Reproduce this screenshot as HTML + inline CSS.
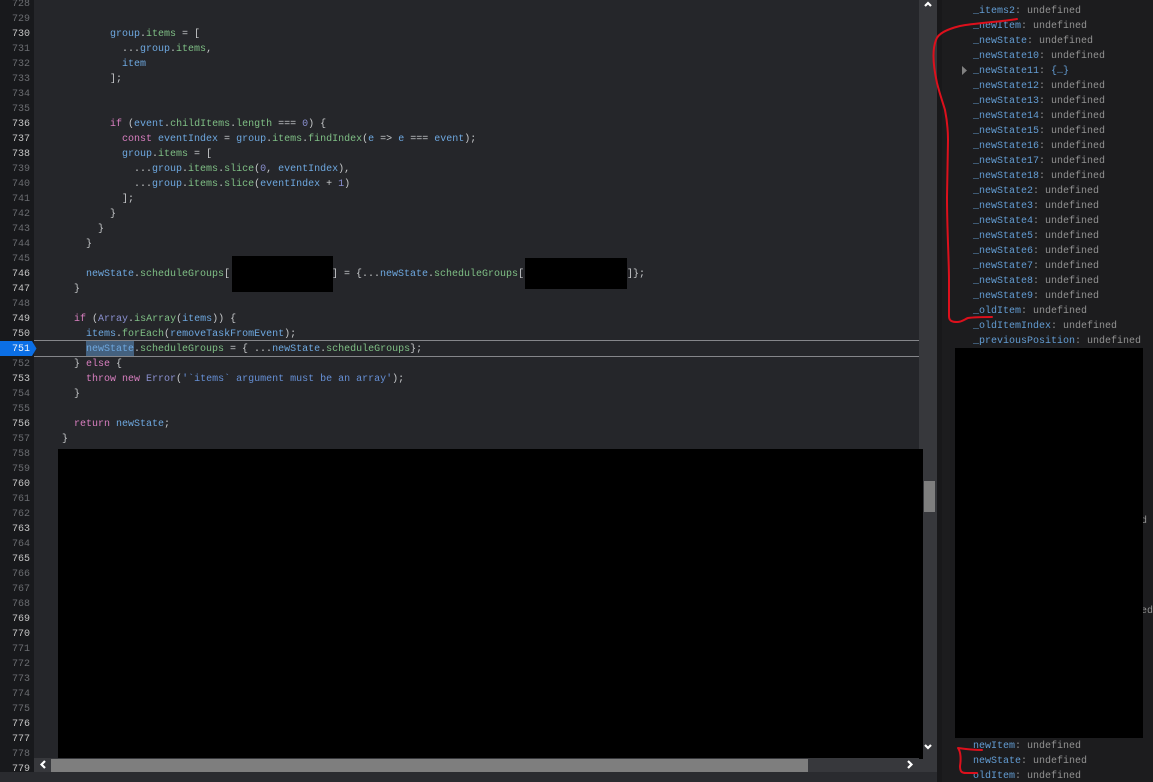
<!DOCTYPE html>
<html><head><meta charset="utf-8"><style>
html,body{margin:0;padding:0;background:#2a2b2f;width:1153px;height:782px;overflow:hidden}
#r{position:relative;width:1153px;height:782px;overflow:hidden;font:10px/15px "Liberation Mono",monospace;color:#c8c8c8;filter:blur(.25px)}
#r div{position:absolute}
.l{left:62px;white-space:pre;height:15px;color:#c5c8c6;margin-top:1px}
.n{left:0;width:30px;text-align:right;height:15px;color:#6a6c70;margin-top:1px}
#r .b{color:#c4c4c4}
.k{color:#d97fc0}.v{color:#6ea8e0}.p{color:#7fbf85}.d{color:#8a90d0}.t{color:#c6c8ca}.s{color:#6690d6}.c{color:#7fa8e0}
.e{left:973px;white-space:pre;height:15px;color:#929292;margin-top:1px}
.e i{font-style:normal;color:#639dd4}
</style></head><body><div id="r">
<div style="left:0;top:0;width:34px;height:772px;background:#18191c"></div>
<div style="left:34px;top:0;width:885px;height:758px;background:#25262a"></div>
<div style="left:919px;top:0;width:18px;height:772px;background:#37383c"></div>
<div style="left:937px;top:0;width:216px;height:782px;background:#1c1c1e"></div>
<div style="left:937px;top:0;width:5px;height:782px;background:#18181a"></div>
<div style="left:0;top:772px;width:937px;height:10px;background:#2a2b2f"></div>

<div class="n" style="top:-4px">728</div><div class="n" style="top:11px">729</div><div class="n b" style="top:26px">730</div><div class="n" style="top:41px">731</div><div class="n" style="top:56px">732</div><div class="n" style="top:71px">733</div><div class="n" style="top:86px">734</div><div class="n" style="top:101px">735</div><div class="n b" style="top:116px">736</div><div class="n b" style="top:131px">737</div><div class="n b" style="top:146px">738</div><div class="n" style="top:161px">739</div><div class="n" style="top:176px">740</div><div class="n" style="top:191px">741</div><div class="n" style="top:206px">742</div><div class="n" style="top:221px">743</div><div class="n" style="top:236px">744</div><div class="n" style="top:251px">745</div><div class="n b" style="top:266px">746</div><div class="n b" style="top:281px">747</div><div class="n" style="top:296px">748</div><div class="n b" style="top:311px">749</div><div class="n b" style="top:326px">750</div><div class="n" style="top:356px">752</div><div class="n b" style="top:371px">753</div><div class="n" style="top:386px">754</div><div class="n" style="top:401px">755</div><div class="n b" style="top:416px">756</div><div class="n" style="top:431px">757</div><div class="n" style="top:446px">758</div><div class="n" style="top:461px">759</div><div class="n b" style="top:476px">760</div><div class="n" style="top:491px">761</div><div class="n" style="top:506px">762</div><div class="n b" style="top:521px">763</div><div class="n" style="top:536px">764</div><div class="n b" style="top:551px">765</div><div class="n" style="top:566px">766</div><div class="n" style="top:581px">767</div><div class="n" style="top:596px">768</div><div class="n b" style="top:611px">769</div><div class="n b" style="top:626px">770</div><div class="n" style="top:641px">771</div><div class="n" style="top:656px">772</div><div class="n" style="top:671px">773</div><div class="n" style="top:686px">774</div><div class="n" style="top:701px">775</div><div class="n b" style="top:716px">776</div><div class="n b" style="top:731px">777</div><div class="n" style="top:746px">778</div><div class="n b" style="top:761px">779</div>

<div style="left:34px;top:340px;width:885px;height:15px;border-top:1px solid #85868a;border-bottom:1px solid #85868a"></div>
<div style="left:0;top:341px;width:32px;height:15px;background:#0b6fe6"></div>
<svg style="position:absolute;left:32px;top:341px" width="5" height="15"><path d="M0 0L4.5 7.5L0 15Z" fill="#0b6fe6"/></svg>
<div class="n" style="top:341px;color:#f0f4fa">751</div>
<div style="left:86px;top:341px;width:48px;height:15px;background:#44617f"></div>

<div class="l" style="top:26px"><span class="v">        group</span><span class="t">.</span><span class="p">items</span><span class="t"> = [</span></div>
<div class="l" style="top:41px"><span class="t">          ...</span><span class="v">group</span><span class="t">.</span><span class="p">items</span><span class="t">,</span></div>
<div class="l" style="top:56px"><span class="v">          item</span></div>
<div class="l" style="top:71px"><span class="t">        ];</span></div>
<div class="l" style="top:116px"><span class="k">        if</span><span class="t"> (</span><span class="v">event</span><span class="t">.</span><span class="p">childItems</span><span class="t">.</span><span class="p">length</span><span class="t"> === </span><span class="d">0</span><span class="t">) {</span></div>
<div class="l" style="top:131px"><span class="k">          const</span> <span class="v">eventIndex</span><span class="t"> = </span><span class="v">group</span><span class="t">.</span><span class="p">items</span><span class="t">.</span><span class="p">findIndex</span><span class="t">(</span><span class="v">e</span><span class="t"> =&gt; </span><span class="v">e</span><span class="t"> === </span><span class="v">event</span><span class="t">);</span></div>
<div class="l" style="top:146px"><span class="v">          group</span><span class="t">.</span><span class="p">items</span><span class="t"> = [</span></div>
<div class="l" style="top:161px"><span class="t">            ...</span><span class="v">group</span><span class="t">.</span><span class="p">items</span><span class="t">.</span><span class="p">slice</span><span class="t">(</span><span class="d">0</span><span class="t">, </span><span class="v">eventIndex</span><span class="t">),</span></div>
<div class="l" style="top:176px"><span class="t">            ...</span><span class="v">group</span><span class="t">.</span><span class="p">items</span><span class="t">.</span><span class="p">slice</span><span class="t">(</span><span class="v">eventIndex</span><span class="t"> + </span><span class="d">1</span><span class="t">)</span></div>
<div class="l" style="top:191px"><span class="t">          ];</span></div>
<div class="l" style="top:206px"><span class="t">        }</span></div>
<div class="l" style="top:221px"><span class="t">      }</span></div>
<div class="l" style="top:236px"><span class="t">    }</span></div>
<div class="l" style="top:266px"><span class="v">    newState</span><span class="t">.</span><span class="p">scheduleGroups</span><span class="t">[</span></div>
<div class="l" style="top:266px;left:332px"><span class="t">] = {...</span><span class="v">newState</span><span class="t">.</span><span class="p">scheduleGroups</span><span class="t">[</span></div>
<div class="l" style="top:266px;left:627px"><span class="t">]};</span></div>
<div class="l" style="top:281px"><span class="t">  }</span></div>
<div class="l" style="top:311px"><span class="k">  if</span><span class="t"> (</span><span class="d">Array</span><span class="t">.</span><span class="p">isArray</span><span class="t">(</span><span class="v">items</span><span class="t">)) {</span></div>
<div class="l" style="top:326px"><span class="v">    items</span><span class="t">.</span><span class="p">forEach</span><span class="t">(</span><span class="v">removeTaskFromEvent</span><span class="t">);</span></div>
<div class="l" style="top:341px"><span class="v">    newState</span><span class="t">.</span><span class="p">scheduleGroups</span><span class="t"> = { ...</span><span class="v">newState</span><span class="t">.</span><span class="p">scheduleGroups</span><span class="t">};</span></div>
<div class="l" style="top:356px"><span class="t">  } </span><span class="k">else</span><span class="t"> {</span></div>
<div class="l" style="top:371px"><span class="k">    throw new</span> <span class="d">Error</span><span class="t">(</span><span class="s">'`items` argument must be an array'</span><span class="t">);</span></div>
<div class="l" style="top:386px"><span class="t">  }</span></div>
<div class="l" style="top:416px"><span class="k">  return</span> <span class="v">newState</span><span class="t">;</span></div>
<div class="l" style="top:431px"><span class="t">}</span></div>

<div style="left:232px;top:256px;width:101px;height:36px;background:#000"></div>
<div style="left:525px;top:258px;width:102px;height:31px;background:#000"></div>
<div style="left:58px;top:449px;width:865px;height:310px;background:#000"></div>

<div style="left:34px;top:758px;width:885px;height:14px;background:#37383c"></div>
<div style="left:51px;top:759px;width:757px;height:13px;background:#7e7e7e"></div>
<div style="left:924px;top:481px;width:11px;height:31px;background:#7e7e7e"></div>
<svg style="position:absolute;left:0;top:0" width="1153" height="782" fill="none" stroke="#fff" stroke-width="2.2">
<path d="M925 6L928 3L931 6"/><path d="M925 745L928 748L931 745"/><path d="M45 761L41.5 764.5L45 768"/><path d="M908 761L911.5 764.5L908 768"/>
</svg>

<div class="e" style="top:-12px"><i>_items</i>: undefined</div>
<div class="e" style="top:3px"><i>_items2</i>: undefined</div>
<div class="e" style="top:18px"><i>_newItem</i>: undefined</div>
<div class="e" style="top:33px"><i>_newState</i>: undefined</div>
<div class="e" style="top:48px"><i>_newState10</i>: undefined</div>
<div class="e" style="top:63px"><i>_newState11</i>: <i>{…}</i></div>
<div class="e" style="top:78px"><i>_newState12</i>: undefined</div>
<div class="e" style="top:93px"><i>_newState13</i>: undefined</div>
<div class="e" style="top:108px"><i>_newState14</i>: undefined</div>
<div class="e" style="top:123px"><i>_newState15</i>: undefined</div>
<div class="e" style="top:138px"><i>_newState16</i>: undefined</div>
<div class="e" style="top:153px"><i>_newState17</i>: undefined</div>
<div class="e" style="top:168px"><i>_newState18</i>: undefined</div>
<div class="e" style="top:183px"><i>_newState2</i>: undefined</div>
<div class="e" style="top:198px"><i>_newState3</i>: undefined</div>
<div class="e" style="top:213px"><i>_newState4</i>: undefined</div>
<div class="e" style="top:228px"><i>_newState5</i>: undefined</div>
<div class="e" style="top:243px"><i>_newState6</i>: undefined</div>
<div class="e" style="top:258px"><i>_newState7</i>: undefined</div>
<div class="e" style="top:273px"><i>_newState8</i>: undefined</div>
<div class="e" style="top:288px"><i>_newState9</i>: undefined</div>
<div class="e" style="top:303px"><i>_oldItem</i>: undefined</div>
<div class="e" style="top:318px"><i>_oldItemIndex</i>: undefined</div>
<div class="e" style="top:333px"><i>_previousPosition</i>: undefined</div>
<div class="e" style="top:513px;left:1093px">undefined</div>
<div class="e" style="top:603px;left:1099px">undefined</div>
<div class="e" style="top:738px"><i>newItem</i>: undefined</div>
<div class="e" style="top:753px"><i>newState</i>: undefined</div>
<div class="e" style="top:768px"><i>oldItem</i>: undefined</div>
<svg style="position:absolute;left:961px;top:65px" width="7" height="11"><path d="M1 1L6 5.5L1 10Z" fill="#808080"/></svg>

<div style="left:955px;top:348px;width:188px;height:390px;background:#000"></div>

<svg style="position:absolute;left:0;top:0" width="1153" height="782" fill="none" stroke="#dc101c" stroke-width="2" stroke-linecap="round" stroke-linejoin="round">
<path d="M1017 19C1000 22 975 23 960 26C948 29 938 33 936 40C932 50 933 65 937 83C940 95 943 103 945 110C947 120 948 128 948 140L947 197C947 230 949 260 949 280L949 316C949 321 952 322 957 322C962 322 965 319 968 318C975 317 985 317 992 317"/>
<path d="M982 750C973 750 965 749 958 748C961 752 961 760 960 766C960 772 962 773 966 773C970 773 974 773 977 773"/>
</svg>
</div></body></html>
